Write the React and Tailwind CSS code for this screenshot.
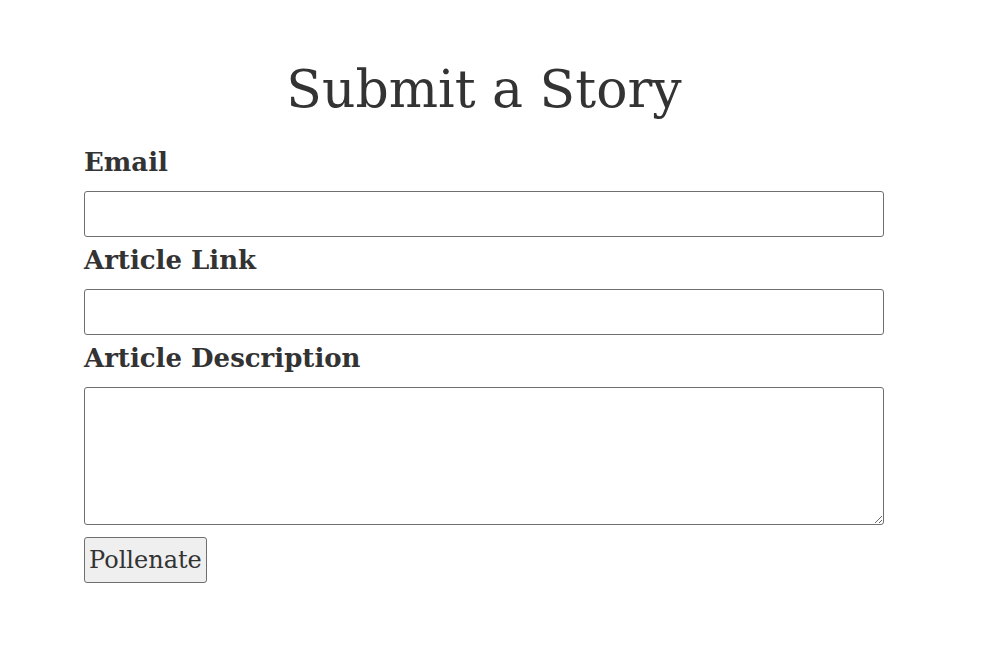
import React from 'react';

// Simple story submission form
function Field({ label, children }) {
  return (
    <div className="flex flex-col">
      <label className="block text-[26px] font-bold leading-[30px] pt-[8px] pb-[14px]">{label}</label>
      {children}
    </div>
  );
}

export default function App() {
  return (
    <div className="min-h-[670px] bg-white text-[#333] font-['DejaVu_Serif',Georgia,serif]">
      <div className="w-[968px]">
        <div className="w-[800px] mx-auto pt-[47px]">
          <h1 className="text-center text-[52px] leading-[84px] pb-[8px] font-normal">Submit a Story</h1>
          <form onSubmit={(e) => e.preventDefault()}>
            <Field label="Email">
              <input type="email" className="h-[46px] w-full border border-[#6f6f6f] rounded-[3px] bg-white px-2 text-[20px]" />
            </Field>
            <Field label="Article Link">
              <input type="text" className="h-[46px] w-full border border-[#6f6f6f] rounded-[3px] bg-white px-2 text-[20px]" />
            </Field>
            <Field label="Article Description">
              <textarea className="h-[138px] w-full border border-[#6f6f6f] rounded-[3px] bg-white p-2 text-[20px] block" />
            </Field>
            <button type="submit" className="mt-[12px] h-[46px] px-[4px] bg-[#efefef] border border-[#6f6f6f] rounded-[3px] text-[24px] text-[#333]">
              Pollenate
            </button>
          </form>
        </div>
      </div>
    </div>
  );
}
